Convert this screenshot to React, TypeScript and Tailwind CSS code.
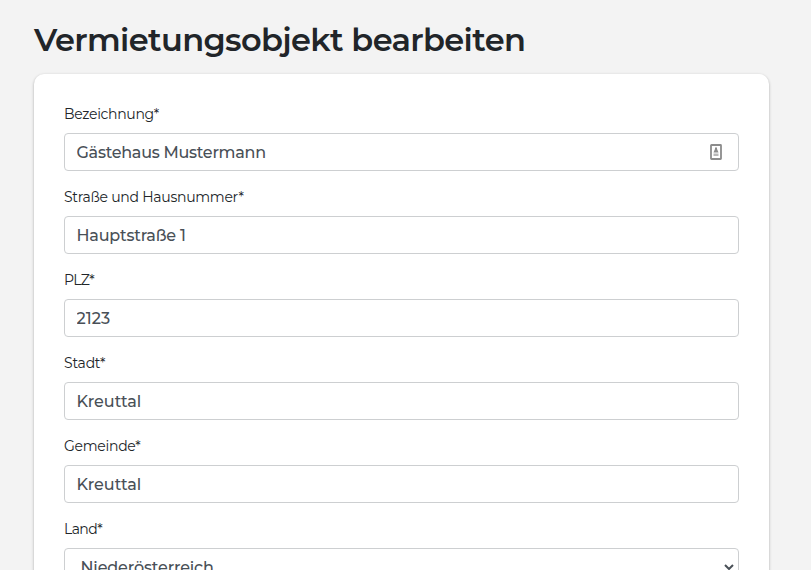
import React from 'react';

interface FieldProps {
  id: string;
  label: string;
  value: string;
  labelClass: string;
  valueClass: string;
  autofillIcon?: boolean;
}

const fields: FieldProps[] = [
  {
    id: 'name',
    label: 'Bezeichnung*',
    value: 'Gästehaus Mustermann',
    labelClass: 'tracking-[-0.32px]',
    valueClass: 'tracking-[-0.27px]',
    autofillIcon: true,
  },
  {
    id: 'street',
    label: 'Straße und Hausnummer*',
    value: 'Hauptstraße 1',
    labelClass: 'tracking-[-0.27px]',
    valueClass: 'tracking-[-0.2px]',
  },
  { id: 'zip', label: 'PLZ*', value: '2123', labelClass: 'tracking-[-0.7px]', valueClass: 'tracking-[0.1px]' },
  { id: 'city', label: 'Stadt*', value: 'Kreuttal', labelClass: 'tracking-[-0.2px]', valueClass: 'tracking-[-0.05px]' },
  { id: 'community', label: 'Gemeinde*', value: 'Kreuttal', labelClass: 'tracking-[-0.28px]', valueClass: 'tracking-[-0.05px]' },
];

const AutofillIcon: React.FC = () => (
  <svg className="absolute right-[17px] top-[11px]" width="12" height="16" viewBox="0 0 12 16" fill="none">
    <rect x="1" y="1" width="10" height="14" rx="0.5" stroke="#8c8c8c" strokeWidth="1.8" />
    <rect x="5" y="3.5" width="2" height="2.5" fill="#8c8c8c" />
    <path d="M5 5h2l1.5 3.5h-5Z" fill="#8c8c8c" />
    <rect x="3.5" y="9.5" width="5" height="2.5" fill="#b8b8b8" />
  </svg>
);

const Field: React.FC<FieldProps> = ({ id, label, value, labelClass, valueClass, autofillIcon }) => (
  <div className="mb-4">
    <label htmlFor={id} className={`mb-2 block text-sm leading-[21px] ${labelClass}`}>
      {label}
    </label>
    <div className="relative">
      <input
        id={id}
        type="text"
        defaultValue={value}
        className={`block h-[38px] w-full rounded border border-[#cdcfd1] bg-white px-[11.5px] text-base font-medium text-[#495057] outline-none ${valueClass}`}
      />
      {autofillIcon && <AutofillIcon />}
    </div>
  </div>
);

const App: React.FC = () => {
  return (
    <div className="h-screen overflow-hidden bg-[#f3f3f3] px-[34px] pt-[21px] font-['Montserrat','Inter',sans-serif] text-[#212529]">
      <h1 className="mb-[15px] whitespace-nowrap text-[32px] font-semibold leading-[38px] tracking-[-0.6px]">
        Vermietungsobjekt bearbeiten
      </h1>

      <div className="mr-[8px] h-[640px] rounded-[10px] bg-white p-[30px] shadow-[0_1px_3px_rgba(0,0,0,0.3)]">
        {fields.map((field) => (
          <Field key={field.id} {...field} />
        ))}

        <label htmlFor="state" className="mb-2 block text-sm leading-[21px] tracking-[-0.6px]">
          Land*
        </label>
        <div className="relative">
          <select
            id="state"
            className="block h-[38px] w-full appearance-none rounded border border-[#cdcfd1] bg-white px-[15.5px] pt-0.5 text-base font-medium tracking-[-0.15px] text-[#495057] outline-none"
          >
            <option>Niederösterreich</option>
          </select>
          <svg className="absolute right-[5px] top-4" width="10" height="7" viewBox="0 0 10 7" fill="none">
            <path d="M1 1 5 5 9 1" stroke="#495057" strokeWidth="2" />
          </svg>
        </div>
      </div>
    </div>
  );
};

export default App;
